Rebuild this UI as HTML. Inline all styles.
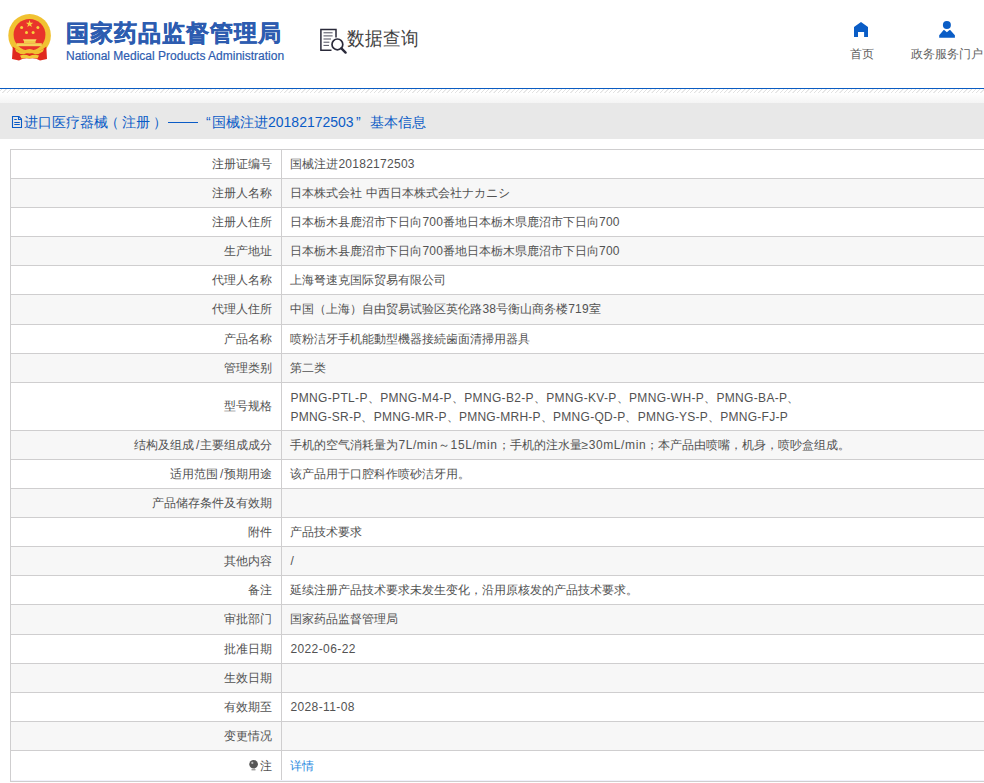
<!DOCTYPE html>
<html><head><meta charset="utf-8">
<style>
*{margin:0;padding:0;box-sizing:border-box}
html,body{width:984px;height:783px;overflow:hidden;background:#fff;font-family:"Liberation Sans",sans-serif;}
.abs{position:absolute}
.row{position:absolute;left:10px;width:1000px;border:1px solid #cfcecf;display:flex;align-items:center;font-size:12px;color:#525252;white-space:nowrap}
.row .lb{position:absolute;left:0;top:0;bottom:0;width:271px;border-right:1px solid #cfcecf;text-align:right;padding-right:8.6px;display:flex;align-items:center;justify-content:flex-end}
.row .vl{position:absolute;left:279.4px;top:0;bottom:0;display:flex;align-items:center;line-height:19px}
.two .vl>div{position:relative;top:1px}
.lk{color:#2b8ae0}
.bulb{display:inline-block;width:8px;height:10px;background:#333;border-radius:4px 4px 2px 2px;margin-right:1px}
#hdr-line{position:absolute;left:0;top:88px;width:984px;height:1px;background:#0a5cc2}
#hatch{position:absolute;left:0;top:89px;width:984px;height:4px;background:repeating-linear-gradient(-45deg,#fff 0,#fff 1.9px,#e2e2e2 2.2px,#e2e2e2 2.8px,#fff 3.02px)}
#grad{position:absolute;left:0;top:93px;width:984px;height:10px;background:linear-gradient(#fff,#f4f4f4)}
#bar{position:absolute;left:0;top:103px;width:984px;height:36px;background:#e8e8e8}
.tt{position:absolute;top:112px;font-size:14px;color:#0a5bc6;white-space:nowrap;line-height:20px}
.logo-cn{position:absolute;left:66px;top:18px;font-size:23px;letter-spacing:1px;font-weight:bold;-webkit-text-stroke:0.45px #2d5cb0;color:#2d5cb0;white-space:nowrap;line-height:30px}
.logo-en{position:absolute;left:66px;top:48.5px;font-size:12px;-webkit-text-stroke:0.2px #2d5cb0;color:#2d5cb0;white-space:nowrap;line-height:14px}
.sq{position:absolute;left:347px;top:26px;font-size:17.5px;color:#3f3f3f;white-space:nowrap;line-height:24px;transform:scaleY(1.08);transform-origin:0 0}
.nav{position:absolute;font-size:12px;color:#606060;white-space:nowrap;line-height:14px}
</style></head><body>
<svg class="abs" style="left:0;top:0" width="60" height="66" viewBox="0 0 60 66">
  <circle cx="29.6" cy="35.4" r="21.3" fill="#f1c232"/>
  <circle cx="29.5" cy="34.8" r="15.9" fill="#e9342b"/>
  <path d="M12.8 46.5 Q20 53 29.5 53.5 Q39 53 46.3 46.5 L47 59 L40 60.5 Q35 57.5 29.5 58.5 Q24 57.5 19 60.5 L12 59Z" fill="#e02a1e"/>
  <path d="M29.6 20.1 L30.5 22.7 L33.3 22.7 L31.1 24.4 L31.9 27 L29.6 25.4 L27.3 27 L28.1 24.4 L25.9 22.7 L28.7 22.7Z" fill="#f7d23e"/>
  <circle cx="21.6" cy="27.6" r="1.5" fill="#f7d23e"/><circle cx="37.9" cy="27.6" r="1.5" fill="#f7d23e"/>
  <circle cx="26.5" cy="32.4" r="1.5" fill="#f7d23e"/><circle cx="33.1" cy="32.4" r="1.5" fill="#f7d23e"/>
  <path d="M22.8 39.2 H36.6 L35.5 41.2 H24 Z" fill="#f7d860"/>
  <rect x="24" y="41" width="11.5" height="2" fill="#f3ca48"/>
  <rect x="16.5" y="43.2" width="25.3" height="3" fill="#f5d458"/>
  <path d="M15 48.5 Q21 52.5 24.5 50.5 Q29.5 47.5 34.5 50.5 Q38 52.5 44 48.5 L43 51.5 Q38 55 34.5 54 Q29.5 51.5 24.5 54 Q21 55 16 51.5Z" fill="#f1c232"/>
  <path d="M20 55.5 Q25 54 29.5 56 Q34 54 39 55.5 L37.5 58.5 Q33.5 57.5 29.5 58.5 Q25.5 57.5 21.5 58.5Z" fill="#f3ca3a"/>
</svg>
<div class="logo-cn">国家药品监督管理局</div>
<div class="logo-en">National Medical Products Administration</div>
<svg class="abs" style="left:318px;top:26px" width="32" height="32" viewBox="0 0 32 32">
  <path d="M13.5 24.2 H2.9 V3.4 H18 V11.5" fill="none" stroke="#2a2a3a" stroke-width="1.5"/>
  <path d="M5.5 6.8 H14.6 M5.5 9.9 H14.6 M5.5 13 H13 M5.5 16.2 H11.4 M5.5 19.4 H11" stroke="#3a3a4c" stroke-width="0.9"/>
  <circle cx="19.4" cy="18.4" r="5.4" fill="#fff" stroke="#2a2a3a" stroke-width="1.7"/>
  <path d="M23.4 22.4 L27.6 26.6" stroke="#2a2a3a" stroke-width="2.4" stroke-linecap="round"/>
</svg>
<div class="sq">数据查询</div>
<svg class="abs" style="left:852px;top:20px" width="18" height="18" viewBox="0 0 18 18">
  <path d="M9 2 L16 7 V17 H12.1 V12 H6 V17 H2 V7 Z" fill="#0a5dc6"/>
</svg>
<div class="nav" style="left:850px;top:47px">首页</div>
<svg class="abs" style="left:937px;top:19px" width="20" height="20" viewBox="0 0 20 20">
  <circle cx="9.9" cy="5.9" r="4" fill="#0a5dc6"/>
  <path d="M2.2 18.8 V16.3 L6.6 11.1 Q7.2 10.8 7.6 11.2 L9.9 13.3 L12.2 11.2 Q12.6 10.8 13.2 11.1 L17.9 16.3 V18.8 Z" fill="#0a5dc6"/>
</svg>
<div class="nav" style="left:911px;top:47px">政务服务门户</div>
<div id="hdr-line"></div>
<div id="hatch"></div>
<div id="grad"></div>
<div id="bar"></div>
<svg class="abs" style="left:11px;top:115px" width="12" height="14" viewBox="0 0 12 14"><path d="M1.5 1.5 H8 L10.5 4 V12.5 H1.5Z" fill="none" stroke="#0a5bc6" stroke-width="1.1"/><path d="M7.5 1.5 V4.5 H10.5" fill="none" stroke="#0a5bc6" stroke-width="1.1"/><path d="M3.3 4.5 H5.8 M3.3 7.5 H8.8 M3.3 9.5 H8.8" stroke="#0a5bc6" stroke-width="1.1"/></svg>
<div class="tt" style="left:24px">进口医疗器械</div>
<div class="tt" style="left:105px">（</div>
<div class="tt" style="left:122px">注册</div>
<div class="tt" style="left:153px">）</div>
<div class="abs" style="left:168px;top:122px;width:30px;height:1px;background:#0a5bc6"></div>
<div class="tt" style="left:206px">“</div>
<div class="tt" style="left:212px">国械注进20182172503</div>
<div class="tt" style="left:356px">”</div>
<div class="tt" style="left:370px">基本信息</div>
<div class="row" style="top:149px;height:30px;background:#fff"><div class="lb">注册证编号</div><div class="vl"><div>国械注进<span style="letter-spacing:0.27px">20182172503</span></div></div></div>
<div class="row" style="top:178px;height:30px;background:#f7f7f7"><div class="lb">注册人名称</div><div class="vl"><div>日本株式会社 中西日本株式会社ナカニシ</div></div></div>
<div class="row" style="top:207px;height:30px;background:#fff"><div class="lb">注册人住所</div><div class="vl"><div>日本栃木县鹿沼市下日向<span style="letter-spacing:0.2px">700</span>番地日本栃木県鹿沼市下日向<span style="letter-spacing:0.2px">700</span></div></div></div>
<div class="row" style="top:236px;height:30px;background:#f7f7f7"><div class="lb">生产地址</div><div class="vl"><div>日本栃木县鹿沼市下日向<span style="letter-spacing:0.2px">700</span>番地日本栃木県鹿沼市下日向<span style="letter-spacing:0.2px">700</span></div></div></div>
<div class="row" style="top:265px;height:30px;background:#fff"><div class="lb">代理人名称</div><div class="vl"><div>上海弩速克国际贸易有限公司</div></div></div>
<div class="row" style="top:294px;height:31px;background:#f7f7f7"><div class="lb">代理人住所</div><div class="vl"><div>中国（上海）自由贸易试验区英伦路<span style="letter-spacing:0.2px">38</span>号衡山商务楼<span style="letter-spacing:0.2px">719</span>室</div></div></div>
<div class="row" style="top:324px;height:30px;background:#fff"><div class="lb">产品名称</div><div class="vl"><div>喷粉洁牙手机能動型機器接続歯面清掃用器具</div></div></div>
<div class="row" style="top:353px;height:30px;background:#f7f7f7"><div class="lb">管理类别</div><div class="vl"><div>第二类</div></div></div>
<div class="row two" style="top:382px;height:49px;background:#fff"><div class="lb">型号规格</div><div class="vl"><div><span style="letter-spacing:0.34px">PMNG-PTL-P、PMNG-M4-P、PMNG-B2-P、PMNG-KV-P、PMNG-WH-P、PMNG-BA-P、</span><br><span style="letter-spacing:0.26px">PMNG-SR-P、PMNG-MR-P、PMNG-MRH-P、PMNG-QD-P、PMNG-YS-P、PMNG-FJ-P</span></div></div></div>
<div class="row" style="top:430px;height:30px;background:#f7f7f7"><div class="lb">结构及组成<span style="margin:0 1px 0 2px">/</span>主要组成成分</div><div class="vl"><div>手机的空气消耗量为<span style="letter-spacing:0.6px">7L/min～15L/min</span>；手机的注水量<span style="letter-spacing:0.6px">≥30mL/min</span>；本产品由喷嘴，机身，喷吵盒组成。</div></div></div>
<div class="row" style="top:459px;height:30px;background:#fff"><div class="lb">适用范围<span style="margin:0 1px 0 2px">/</span>预期用途</div><div class="vl"><div>该产品用于口腔科作喷砂洁牙用。</div></div></div>
<div class="row" style="top:488px;height:30px;background:#f7f7f7"><div class="lb">产品储存条件及有效期</div><div class="vl"><div></div></div></div>
<div class="row" style="top:517px;height:30px;background:#fff"><div class="lb">附件</div><div class="vl"><div>产品技术要求</div></div></div>
<div class="row" style="top:546px;height:30px;background:#f7f7f7"><div class="lb">其他内容</div><div class="vl"><div>/</div></div></div>
<div class="row" style="top:575px;height:30px;background:#fff"><div class="lb">备注</div><div class="vl"><div>延续注册产品技术要求未发生变化，沿用原核发的产品技术要求。</div></div></div>
<div class="row" style="top:604px;height:31px;background:#f7f7f7"><div class="lb">审批部门</div><div class="vl"><div>国家药品监督管理局</div></div></div>
<div class="row" style="top:634px;height:30px;background:#fff"><div class="lb">批准日期</div><div class="vl"><div><span style="letter-spacing:0.4px">2022-06-22</span></div></div></div>
<div class="row" style="top:663px;height:30px;background:#f7f7f7"><div class="lb">生效日期</div><div class="vl"><div></div></div></div>
<div class="row" style="top:692px;height:30px;background:#fff"><div class="lb">有效期至</div><div class="vl"><div><span style="letter-spacing:0.4px">2028-11-08</span></div></div></div>
<div class="row" style="top:721px;height:30px;background:#f7f7f7"><div class="lb">变更情况</div><div class="vl"><div></div></div></div>
<div class="row" style="top:750px;height:32px;background:#fff"><div class="lb"><svg width="12" height="14" viewBox="0 0 12 14" style="margin-right:0px"><circle cx="5.6" cy="5.3" r="4.3" fill="#555"/><circle cx="4.3" cy="3.9" r="1.1" fill="#bbb"/><rect x="3.5" y="10.3" width="4" height="1" fill="#777"/></svg>注</div><div class="vl"><div><span class=lk>详情</span></div></div></div>
<div class="abs" style="left:11px;top:780px;width:973px;height:1px;background:#f1f2fb"></div>
</body></html>
